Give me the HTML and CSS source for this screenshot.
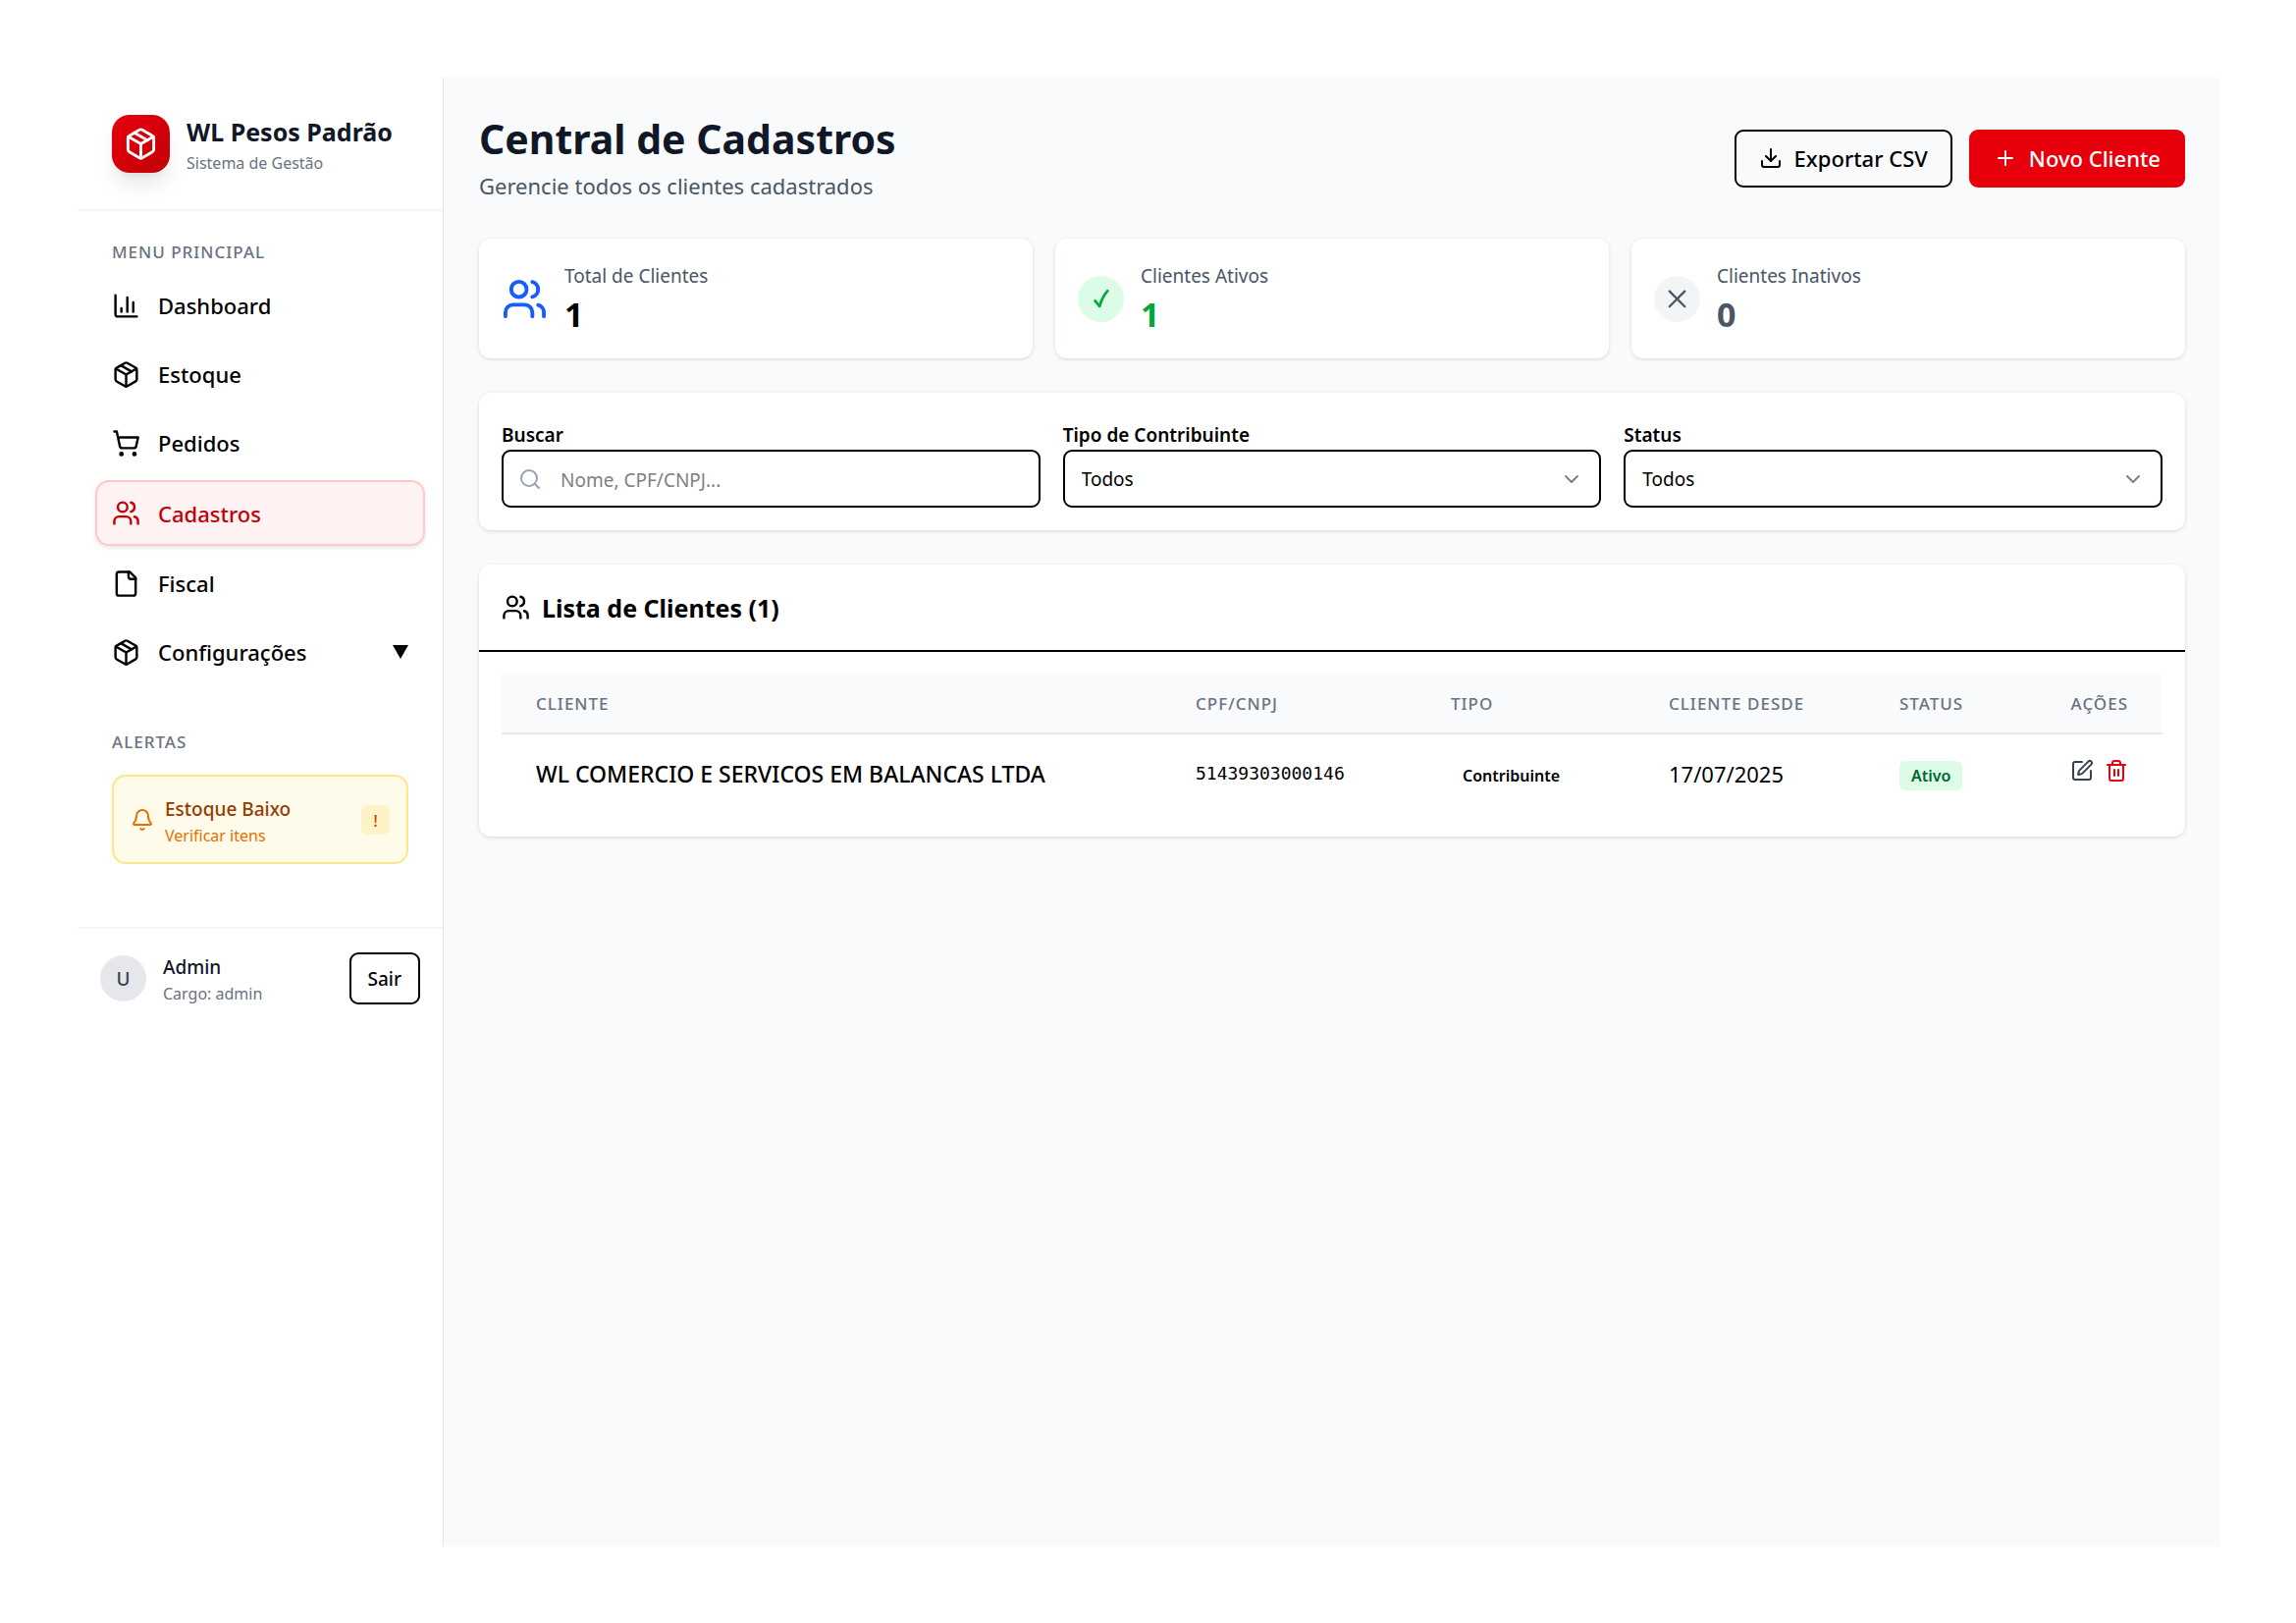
FILE: index.html
```html
<!DOCTYPE html>
<html lang="pt-BR">
<head>
<meta charset="utf-8">
<meta name="viewport" content="width=device-width, initial-scale=1">
<title>WL Pesos Padrão - Central de Cadastros</title>
<link rel="stylesheet" href="styles.css">
</head>
<body>
<svg class="sprite" aria-hidden="true">
  <symbol id="i-package" viewBox="0 0 24 24"><path d="m7.5 4.27 9 5.15"/><path d="M21 8a2 2 0 0 0-1-1.73l-7-4a2 2 0 0 0-2 0l-7 4A2 2 0 0 0 3 8v8a2 2 0 0 0 1 1.73l7 4a2 2 0 0 0 2 0l7-4A2 2 0 0 0 21 16Z"/><path d="m3.3 7 8.7 5 8.7-5"/><path d="M12 22V12"/></symbol>
  <symbol id="i-chart" viewBox="0 0 24 24"><path d="M3 3v16a2 2 0 0 0 2 2h16"/><path d="M18 17V9"/><path d="M13 17V5"/><path d="M8 17v-3"/></symbol>
  <symbol id="i-cart" viewBox="0 0 24 24"><circle cx="8" cy="21" r="1"/><circle cx="19" cy="21" r="1"/><path d="M2.05 2.05h2l2.66 12.42a2 2 0 0 0 2 1.58h9.78a2 2 0 0 0 1.95-1.57l1.65-7.43H5.12"/></symbol>
  <symbol id="i-users" viewBox="0 0 24 24"><path d="M16 21v-2a4 4 0 0 0-4-4H6a4 4 0 0 0-4 4v2"/><circle cx="9" cy="7" r="4"/><path d="M22 21v-2a4 4 0 0 0-3-3.87"/><path d="M16 3.13a4 4 0 0 1 0 7.75"/></symbol>
  <symbol id="i-file" viewBox="0 0 24 24"><path d="M15 2H6a2 2 0 0 0-2 2v16a2 2 0 0 0 2 2h12a2 2 0 0 0 2-2V7Z"/><path d="M14 2v4a2 2 0 0 0 2 2h4"/></symbol>
  <symbol id="i-bell" viewBox="0 0 24 24"><path d="M10.27 21a2 2 0 0 0 3.46 0"/><path d="M3.26 15.33A1 1 0 0 0 4 17h16a1 1 0 0 0 .74-1.67C19.41 13.96 18 12.5 18 8A6 6 0 0 0 6 8c0 4.5-1.41 5.96-2.74 7.33"/></symbol>
  <symbol id="i-download" viewBox="0 0 24 24"><path d="M21 15v4a2 2 0 0 1-2 2H5a2 2 0 0 1-2-2v-4"/><path d="m7 10 5 5 5-5"/><path d="M12 15V3"/></symbol>
  <symbol id="i-plus" viewBox="0 0 24 24"><path d="M5 12h14M12 5v14"/></symbol>
  <symbol id="i-search" viewBox="0 0 24 24"><circle cx="11" cy="11" r="8"/><path d="m21 21-4.3-4.3"/></symbol>
  <symbol id="i-chevron" viewBox="0 0 24 24"><path d="m6 9 6 6 6-6"/></symbol>
  <symbol id="i-edit" viewBox="0 0 24 24"><path d="M12 3H5a2 2 0 0 0-2 2v14a2 2 0 0 0 2 2h14a2 2 0 0 0 2-2v-7"/><path d="M18.38 2.62a1 1 0 0 1 3 3l-9.01 9.02a2 2 0 0 1-.85.5l-2.87.84a.5.5 0 0 1-.62-.62l.84-2.87a2 2 0 0 1 .5-.85z"/></symbol>
  <symbol id="i-trash" viewBox="0 0 24 24"><path d="M3 6h18"/><path d="M19 6v14a2 2 0 0 1-2 2H7a2 2 0 0 1-2-2V6"/><path d="M8 6V4a2 2 0 0 1 2-2h4a2 2 0 0 1 2 2v2"/><path d="M10 11v6M14 11v6"/></symbol>
  <symbol id="i-check" viewBox="0 0 24 24"><path stroke-width="3" d="M5 14.500 10 20.500C12 14 15 8 19 3.500"/></symbol>
  <symbol id="i-cross" viewBox="0 0 24 24"><path stroke-width="2.500" d="M3 4 20 21M20 4 3 21"/></symbol>
</svg>

<div class="app">
  <aside class="sidebar">
    <header class="brand">
      <span class="brand-logo"><svg class="icon icon-lg"><use href="#i-package"/></svg></span>
      <div>
        <p class="brand-name">WL Pesos Padrão</p>
        <p class="brand-sub">Sistema de Gestão</p>
      </div>
    </header>

    <div class="sidebar-body">
      <nav>
        <h2 class="group-label">Menu Principal</h2>
        <ul class="menu">
          <li><a class="menu-item" href="#"><svg class="icon icon-md"><use href="#i-chart"/></svg>Dashboard</a></li>
          <li><a class="menu-item" href="#"><svg class="icon icon-md"><use href="#i-package"/></svg>Estoque</a></li>
          <li><a class="menu-item" href="#"><svg class="icon icon-md"><use href="#i-cart"/></svg>Pedidos</a></li>
          <li><a class="menu-item is-active" href="#" aria-current="page"><svg class="icon icon-md"><use href="#i-users"/></svg>Cadastros</a></li>
          <li><a class="menu-item" href="#"><svg class="icon icon-md"><use href="#i-file"/></svg>Fiscal</a></li>
          <li><button class="menu-item" type="button"><svg class="icon icon-md"><use href="#i-package"/></svg><span class="grow">Configurações</span><svg class="caret" viewBox="0 0 16 14"><path d="M0 0h16L8 14z"/></svg></button></li>
        </ul>
      </nav>
      <section class="alerts">
        <h2 class="group-label">Alertas</h2>
        <a class="alert" href="#">
          <svg class="icon icon-sm"><use href="#i-bell"/></svg>
          <span class="grow">
            <span class="alert-title">Estoque Baixo</span>
            <span class="alert-text">Verificar itens</span>
          </span>
          <span class="alert-badge">!</span>
        </a>
      </section>
    </div>

    <footer class="user">
      <span class="avatar">U</span>
      <div class="grow">
        <p class="user-name">Admin</p>
        <p class="user-role">Cargo: admin</p>
      </div>
      <button class="btn btn-small" type="button">Sair</button>
    </footer>
  </aside>

  <main class="content">
    <header class="page-head">
      <div>
        <h1 class="page-title">Central de Cadastros</h1>
        <p class="page-sub">Gerencie todos os clientes cadastrados</p>
      </div>
      <div class="actions">
        <button class="btn" type="button"><svg class="icon icon-sm"><use href="#i-download"/></svg>Exportar CSV</button>
        <button class="btn btn-primary" type="button"><svg class="icon icon-sm"><use href="#i-plus"/></svg>Novo Cliente</button>
      </div>
    </header>

    <section class="stats">
      <article class="card stat">
        <svg class="icon icon-xl blue"><use href="#i-users"/></svg>
        <div><p class="stat-label">Total de Clientes</p><p class="stat-value">1</p></div>
      </article>
      <article class="card stat">
        <span class="dot dot-green"><svg class="icon icon-xs"><use href="#i-check"/></svg></span>
        <div><p class="stat-label">Clientes Ativos</p><p class="stat-value green">1</p></div>
      </article>
      <article class="card stat">
        <span class="dot dot-gray"><svg class="icon icon-xs"><use href="#i-cross"/></svg></span>
        <div><p class="stat-label">Clientes Inativos</p><p class="stat-value gray">0</p></div>
      </article>
    </section>

    <form class="card filters">
      <div class="field">
        <label for="busca">Buscar</label>
        <div class="control">
          <input class="input has-icon" id="busca" type="text" placeholder="Nome, CPF/CNPJ...">
          <svg class="icon icon-sm search-icon"><use href="#i-search"/></svg>
        </div>
      </div>
      <div class="field">
        <label for="tipo">Tipo de Contribuinte</label>
        <div class="control">
          <select class="input" id="tipo"><option>Todos</option></select>
          <svg class="icon icon-sm chevron"><use href="#i-chevron"/></svg>
        </div>
      </div>
      <div class="field">
        <label for="status">Status</label>
        <div class="control">
          <select class="input" id="status"><option>Todos</option></select>
          <svg class="icon icon-sm chevron"><use href="#i-chevron"/></svg>
        </div>
      </div>
    </form>

    <section class="card">
      <h2 class="list-title"><svg class="icon icon-md"><use href="#i-users"/></svg>Lista de Clientes (1)</h2>
      <div class="table-wrap">
        <table class="table">
          <colgroup><col><col class="col-doc"><col class="col-type"><col class="col-since"><col class="col-status"><col class="col-actions"></colgroup>
          <thead>
            <tr><th>Cliente</th><th>CPF/CNPJ</th><th>Tipo</th><th>Cliente desde</th><th>Status</th><th class="right">Ações</th></tr>
          </thead>
          <tbody>
            <tr>
              <td class="strong">WL COMERCIO E SERVICOS EM BALANCAS LTDA</td>
              <td class="mono">51439303000146</td>
              <td><span class="tag">Contribuinte</span></td>
              <td>17/07/2025</td>
              <td><span class="tag tag-green">Ativo</span></td>
              <td>
                <div class="row-actions">
                  <button class="icon-btn" type="button" aria-label="Editar"><svg class="icon icon-sm"><use href="#i-edit"/></svg></button>
                  <button class="icon-btn danger" type="button" aria-label="Excluir"><svg class="icon icon-sm"><use href="#i-trash"/></svg></button>
                </div>
              </td>
            </tr>
          </tbody>
        </table>
      </div>
    </section>
  </main>
</div>
</body>
</html>
```
FILE: styles.css
```css
:root {
  --xxs: 16px;
  --xs: 17px;
  --sm: 19px;
  --md: 22px;
  --strong: 23px;
  --lg: 25px;
  --xl: 34px;
  --xxl: 41px;
  --red: #e7000b;
  --red-dark: #c10007;
  --ink: #101828;
  --slate: #4a5565;
  --muted: #6a7282;
  --line: #e5e7eb;
}

* { box-sizing: border-box; }

body {
  margin: 0;
  min-height: 100vh;
  padding: 79px 78px 78px 79px;
  display: flex;
  background: #fff;
  color: #000;
  font: 400 var(--md)/32px "Noto Sans", "Open Sans", sans-serif;
}

h1, h2, p, ul { margin: 0; padding: 0; }
ul { list-style: none; }
a { color: inherit; text-decoration: none; }
button, input, select { font: inherit; color: inherit; }
button { cursor: pointer; }

.sprite { display: none; }
.grow { flex: 1; }
.icon { flex: none; display: block; fill: none; stroke: currentColor; stroke-width: 2; stroke-linecap: round; stroke-linejoin: round; }
.icon-xs { width: 22px; height: 22px; }
.icon-sm { width: 24px; height: 24px; }
.icon-md { width: 29px; height: 29px; }
.icon-lg { width: 35px; height: 35px; }
.icon-xl { width: 47px; height: 47px; }
.blue { color: #155dfc; }
.green { color: #00a63e; }
.gray { color: var(--slate); }

.app { flex: 1; display: flex; min-width: 0; }

/* Sidebar */
.sidebar { flex: none; width: 373px; border-right: 1px solid var(--line); }

.brand { display: flex; align-items: center; gap: 17px; padding: 35px; height: 136px; border-bottom: 2px solid #f3f4f6; }
.brand-logo {
  display: grid; place-items: center; flex: none; width: 59px; height: 59px; border-radius: 18px;
  color: #fff; background: linear-gradient(135deg, var(--red), var(--red-dark));
  box-shadow: 0 15px 22px -4px rgba(0, 0, 0, .1), 0 6px 9px -6px rgba(0, 0, 0, .1);
}
.brand-name { padding-top: 4px; font-size: var(--lg); font-weight: 700; line-height: 36px; color: var(--ink); white-space: nowrap; }
.brand-sub { font-size: var(--xxs); line-height: 28px; color: var(--muted); }

.sidebar-body { padding: 18px 18px 64px; }
.group-label { padding: 12px 17px 10px; font-size: var(--xs); font-weight: 500; line-height: 24px; letter-spacing: 1px; text-transform: uppercase; color: var(--muted); }
.menu { display: grid; gap: 6px; }
.menu-item {
  display: flex; align-items: center; gap: 18px; width: 100%; height: 64px; padding: 0 17px;
  border: 0; border-radius: 14px; background: none; font-weight: 500; text-align: left;
}
.menu-item.is-active {
  height: 67px; padding: 0 15px; border: 2px solid #ffc9c9; background: #fef2f2; color: var(--red-dark);
  box-shadow: 0 2px 4px rgba(0, 0, 0, .1);
}
.caret { width: 16px; height: 14px; }

.alerts { margin-top: 36px; }
.alert {
  display: flex; align-items: center; gap: 11px; margin: 11px 17px 0; height: 91px; padding: 0 17px;
  border: 2px solid #fee685; border-radius: 14px; background: #fffbeb; color: #e17100;
}
.alert-title, .alert-text { display: block; white-space: nowrap; }
.alert-title { padding-top: 4px; font-size: var(--sm); font-weight: 500; line-height: 29px; color: #973c00; }
.alert-text { font-size: var(--xxs); line-height: 25px; }
.alert-badge { display: grid; place-items: center; width: 29px; height: 30px; border-radius: 6px; background: #fef3c6; color: #bb4d00; font-size: var(--xs); font-weight: 500; }

.user { display: flex; align-items: center; gap: 17px; padding: 23px; border-top: 2px solid #f3f4f6; }
.avatar { display: grid; place-items: center; width: 47px; height: 47px; border-radius: 50%; background: var(--line); color: #364153; font-size: var(--sm); font-weight: 500; }
.user-name { padding-top: 2px; font-size: var(--sm); font-weight: 500; line-height: 29px; color: var(--ink); }
.user-role { font-size: var(--xxs); line-height: 24px; color: var(--muted); }

/* Buttons */
.btn {
  display: inline-flex; align-items: center; justify-content: center; gap: 12px; height: 59px; padding: 0 23px;
  border: 2px solid #000; border-radius: 9px; background: none; font-weight: 500; white-space: nowrap;
}
.btn-primary { border-color: var(--red); background: var(--red); color: #fff; }
.btn-small { height: 53px; padding: 0 17px; font-size: var(--sm); }

/* Page */
.content { flex: 1; min-width: 0; display: flex; flex-direction: column; gap: 35px; padding: 35px 35px 35px 36px; background: #f9fafb; }
.page-head { display: flex; align-items: center; justify-content: space-between; height: 94px; }
.page-title { font-size: var(--xxl); font-weight: 700; line-height: 56px; color: var(--ink); }
.page-sub { line-height: 40px; color: var(--slate); }
.actions { display: flex; gap: 17px; }

.card { border-radius: 12px; background: #fff; box-shadow: 0 1px 4px rgba(0, 0, 0, .1), 0 1px 3px -1px rgba(0, 0, 0, .1); }

.stats { display: grid; grid-template-columns: repeat(3, 1fr); gap: 23px; }
.stat { display: flex; align-items: center; gap: 17px; height: 122px; padding: 0 23px; }
.stat-label { font-size: var(--sm); line-height: 32px; color: var(--slate); }
.stat-value { font-size: var(--xl); font-weight: 700; line-height: 46px; }
.dot { display: grid; place-items: center; width: 47px; height: 47px; border-radius: 50%; }
.dot-green { background: #dcfce7; color: #00a63e; }
.dot-gray { background: #f3f4f6; color: var(--slate); }

.filters { display: grid; grid-template-columns: repeat(3, 1fr); gap: 23px; padding: 29px 23px 23px; }
.field label { display: block; padding-bottom: 1px; font-size: var(--sm); font-weight: 600; line-height: 28px; }
.control { display: grid; align-items: center; }
.control > * { grid-area: 1 / 1; }
.input { width: 100%; height: 59px; padding: 0 17px; border: 2px solid #000; border-radius: 9px; background: #fff; font-size: var(--sm); appearance: none; }
.input::placeholder { color: #808080; }
.input.has-icon { padding: 3px 17px 0 58px; }
.search-icon { margin-left: 17px; color: #99a1af; }
.chevron { justify-self: end; margin-right: 18px; color: #808080; pointer-events: none; }

.list-title { display: flex; align-items: center; gap: 12px; height: 89px; padding: 0 23px; border-bottom: 2px solid #000; font-size: var(--lg); font-weight: 700; }
.table-wrap { padding: 23px; }
.table { width: 100%; table-layout: fixed; border-collapse: collapse; }
.col-doc { width: 260px; }
.col-type { width: 222px; }
.col-since { width: 235px; }
.col-status { width: 152px; }
.col-actions { width: 151px; }
.table th { height: 60px; padding: 0 35px; border-bottom: 2px solid var(--line); background: #f9fafb; color: var(--muted); font-size: var(--xs); font-weight: 500; letter-spacing: 1px; text-align: left; text-transform: uppercase; white-space: nowrap; }
.table td { height: 82px; padding: 0 35px 2px; white-space: nowrap; }
.table .right { text-align: right; }
.table .strong { font-size: var(--strong); font-weight: 500; }
.table .mono { font: 400 18px/32px "DejaVu Sans Mono", monospace; }
.tag { display: inline-block; padding: 0 12px; border-radius: 6px; font-size: var(--xxs); font-weight: 600; line-height: 30px; vertical-align: middle; }
.tag-green { background: #dcfce7; color: #016630; }
.row-actions { display: flex; justify-content: flex-end; gap: 11px; padding-bottom: 6px; }
.icon-btn { padding: 0; border: 0; background: none; color: #364153; }
.icon-btn.danger { color: var(--red); }
```
